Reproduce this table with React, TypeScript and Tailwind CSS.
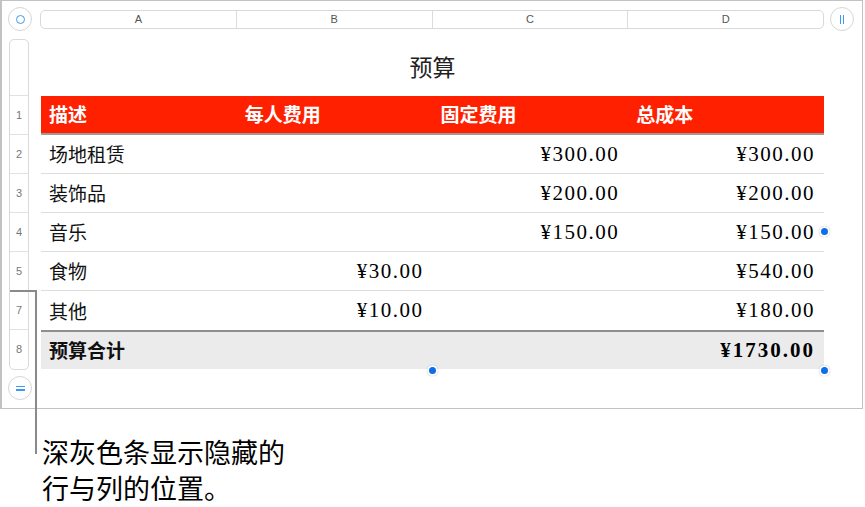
const cjk = { fontFamily: '"Noto Sans CJK SC", "Noto Sans", sans-serif' };
const num = { fontFamily: '"Liberation Serif", serif' };

const rows = [
  { n: '2', name: '场地租赁', b: '', c: '¥300.00', d: '¥300.00' },
  { n: '3', name: '装饰品', b: '', c: '¥200.00', d: '¥200.00' },
  { n: '4', name: '音乐', b: '', c: '¥150.00', d: '¥150.00' },
  { n: '5', name: '食物', b: '¥30.00', c: '', d: '¥540.00' },
  { n: '7', name: '其他', b: '¥10.00', c: '', d: '¥180.00' },
];

function Dot({ className }: { className: string }) {
  return (
    <span
      className={`absolute w-[11px] h-[11px] rounded-full bg-[#0c6fe9] border-2 border-white shadow-[0_0_1px_rgba(0,0,0,0.4)] ${className}`}
    />
  );
}

export default function App() {
  return (
    <div className="relative w-[865px] h-[507px] bg-white overflow-hidden text-[#111]" style={cjk}>
      <div className="w-[863px] h-[409px] border border-[#c2c2c2] border-l-2">
        {/* column header bar */}
        <div className="flex items-center mt-[6px] h-6">
          <div className="ml-[6px] w-6 h-6 rounded-full border border-[#d6d6d6] flex items-center justify-center">
            <span className="w-[9px] h-[9px] rounded-full border-[1.5px] border-[#3c9af4]" />
          </div>
          <div className="ml-[8px] w-[784px] h-[19px] rounded-[5px] border border-[#d9d9d9] flex text-[11px] text-[#555]" style={{ fontFamily: '"Liberation Sans", sans-serif' }}>
            {['A', 'B', 'C', 'D'].map((l, i) => (
              <div key={l} className={`flex-1 flex items-center justify-center ${i < 3 ? 'border-r border-[#dcdcdc]' : ''}`}>
                {l}
              </div>
            ))}
          </div>
          <div className="ml-[6px] w-6 h-6 rounded-full border border-[#d6d6d6] flex items-center justify-center gap-[2px]">
            <span className="w-px h-[9px] bg-[#3c9af4]" />
            <span className="w-px h-[9px] bg-[#3c9af4]" />
          </div>
        </div>

        <div className="flex mt-[8px]">
          {/* row header strip */}
          <div className="ml-[7px] w-[20px] rounded-[5px] border border-[#dadada] flex flex-col text-[11px] text-[#777]" style={{ fontFamily: '"Liberation Sans", sans-serif' }}>
            <div className="h-[56px] border-b border-[#e2e2e2]" />
            {['1', '2', '3', '4', '5', '7', '8'].map((n, i) => (
              <div key={n} className={`h-[39px] flex items-center justify-center ${i < 6 ? 'border-b border-[#e2e2e2]' : ''}`}>
                {n}
              </div>
            ))}
          </div>

          {/* table */}
          <div className="relative ml-[12px] w-[783px]">
            <div className="h-[57px] flex items-center justify-center text-[23px] text-[#222] pb-[2px]">预算</div>
            <div className="h-[39px] grid grid-cols-4 bg-[#ff2000] border-b-2 border-[#9b9b9b] text-white font-bold text-[19px]">
              {['描述', '每人费用', '固定费用', '总成本'].map((h) => (
                <div key={h} className="flex items-center pl-2">{h}</div>
              ))}
            </div>
            {rows.map((r, i) => (
              <div key={r.n} className={`h-[39px] grid grid-cols-4 text-[19px] ${i < 4 ? 'border-b border-[#dedede]' : ''}`}>
                <div className="flex items-center pl-2 pt-px">{r.name}</div>
                {[r.b, r.c, r.d].map((v, j) => (
                  <div key={j} className="flex items-center justify-end pr-[9px] pt-px text-[21px] tracking-[1.5px] text-black" style={num}>
                    {v}
                  </div>
                ))}
              </div>
            ))}
            <div className="h-[39px] grid grid-cols-4 bg-[#ebebeb] border-t-2 border-[#8e8e8e] text-[19px] font-bold">
              <div className="flex items-center pl-2">预算合计</div>
              <div />
              <div />
              <div className="flex items-center justify-end pr-[9px] text-[21px] tracking-[2px] text-black" style={num}>
                ¥1730.00
              </div>
            </div>
            <Dot className="right-[-6px] top-[187px]" />
            <Dot className="left-[386px] bottom-[-6px]" />
            <Dot className="right-[-6px] bottom-[-6px]" />
          </div>
        </div>

        {/* add row button */}
        <div className="ml-[6px] mt-[6px] w-6 h-6 rounded-full border border-[#d6d6d6] flex flex-col items-center justify-center gap-[2px]">
          <span className="w-[9px] h-[1.5px] bg-[#3c9af4]" />
          <span className="w-[9px] h-[1.5px] bg-[#3c9af4]" />
        </div>
      </div>

      {/* callout */}
      <div className="absolute left-[10px] top-[290px] w-[27px] h-[2px] bg-[#8a8a8a]" />
      <div className="absolute left-[35px] top-[290px] w-[2px] h-[164px] bg-[#8a8a8a]" />
      <div className="ml-[42px] mt-[25px] text-[27px] leading-[36px] text-black">
        深灰色条显示隐藏的
        <br />
        行与列的位置。
      </div>
    </div>
  );
}
